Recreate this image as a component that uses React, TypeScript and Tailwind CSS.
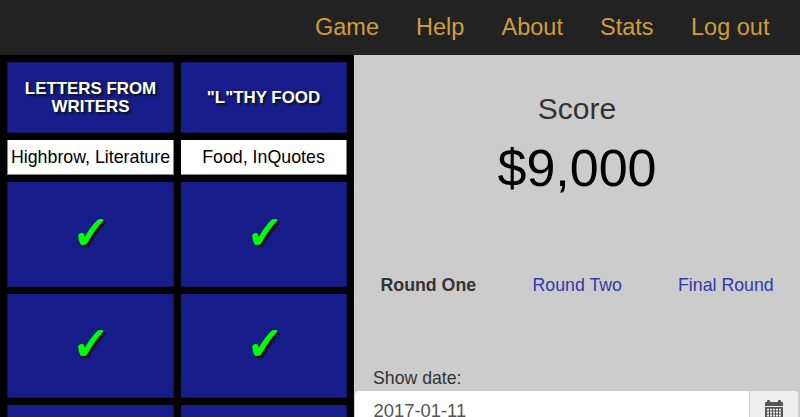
const navItems = [
  { label: "Game", width: "w-[101px]" },
  { label: "Help", width: "w-[85.5px]" },
  { label: "About", width: "w-[98.5px]" },
  { label: "Stats", width: "w-[91px]" },
  { label: "Log out", width: "w-[99px]" },
];

const categories = [
  { title: "LETTERS FROM WRITERS", tags: "Highbrow, Literature" },
  { title: '"L"THY FOOD', tags: "Food, InQuotes" },
];

const checkPath =
  "M0.2 17.2C0 15.1 2.2 13.9 4.4 14.1C6.2 14.3 6.3 17 7 17.6C10.5 11.5 14.5 5.5 19.2 1.2C20.8 0 23 -0.1 24.8 0.3C25.6 0.6 25.4 1.3 24.9 1.9C19 8.3 14 15.8 9.6 23.4C8.6 25.3 6.6 26 4.6 25.9C2.6 25.8 2.2 24.8 1.6 23.2C0.9 21.2 0.4 19.2 0.2 17.2Z";

function CheckMark() {
  return (
    <svg viewBox="0 0 29 29" className="h-[29px] w-[29px]">
      <path d={checkPath} fill="#111" transform="translate(2.4 2.4)" />
      <path d={checkPath} fill="#00ff00" />
    </svg>
  );
}

function Clue({ checked }: { checked?: boolean }) {
  return (
    <div className="flex items-center justify-center border-r border-b border-[#0f1460] bg-[#161d8b] pb-[2px] pl-[3px] odd:border-l even:pl-[5px]">
      {checked && <CheckMark />}
    </div>
  );
}

function Board() {
  return (
    <main className="grid w-[354px] shrink-0 grid-cols-[167px_166px] grid-rows-[71px_35px_105px_104px_105px] gap-x-[7px] gap-y-[7px] overflow-hidden border-r border-[#111] bg-black pt-[7px] pl-[7px]">
      {categories.map((c) => (
        <div
          key={c.title}
          className="flex items-center justify-center border-t border-r border-b border-[#0f1460] bg-[#161d8b] px-3 text-center text-[16.9px] leading-[18px] font-bold text-white [text-shadow:2px_2px_2px_#111] odd:border-l"
        >
          {c.title}
        </div>
      ))}
      {categories.map((c) => (
        <div
          key={c.tags}
          className="flex items-center justify-center border-r border-b border-[#888] bg-white text-[17.8px] whitespace-nowrap text-black odd:border-l"
        >
          {c.tags}
        </div>
      ))}
      <Clue checked />
      <Clue checked />
      <Clue checked />
      <Clue checked />
      <Clue />
      <Clue />
    </main>
  );
}

function CalendarIcon() {
  return (
    <svg viewBox="0 0 18 19" className="h-[19px] w-[18px]" fill="#555">
      <path d="M0 3Q0 2 1 2H2V1Q2 0 3 0H4Q5 0 5 1V2H13V1Q13 0 14 0H15Q16 0 16 1V2H17Q18 2 18 3V6H0Z" />
      <path
        fillRule="evenodd"
        d="M0 7H18V19H0ZM2 8.8V10.5H4V8.8ZM5 8.8V10.5H7V8.8ZM8 8.8V10.5H10V8.8ZM11 8.8V10.5H13V8.8ZM14 8.8V10.5H16V8.8ZM2 11.5V13.5H4V11.5ZM5 11.5V13.5H7V11.5ZM8 11.5V13.5H10V11.5ZM11 11.5V13.5H13V11.5ZM14 11.5V13.5H16V11.5ZM2 14.5V16.5H4V14.5ZM5 14.5V16.5H7V14.5ZM8 14.5V16.5H10V14.5ZM11 14.5V16.5H13V14.5ZM14 14.5V16.5H16V14.5Z"
      />
    </svg>
  );
}

function Sidebar() {
  return (
    <aside className="flex flex-1 flex-col overflow-hidden bg-[#ccc]">
      <div className="mt-[37px] text-center text-[30px] leading-[33px] text-[#333]">Score</div>
      <div className="mt-[13px] text-center text-[52px] leading-[60px] text-black">$9,000</div>
      <div className="mt-[75px] flex pl-[26.5px] text-[17.75px] leading-[24px] text-[#3238ad]">
        <b className="w-[152px] text-[#333]">Round One</b>
        <a className="w-[145.5px]">Round Two</a>
        <a>Final Round</a>
      </div>
      <label className="mt-[69px] pl-[19px] text-[17.7px] leading-[24px] text-[#333]">Show date:</label>
      <div className="mt-px mr-[2px] ml-px flex h-[45px] shrink-0 overflow-hidden rounded-[4px] bg-white">
        <div className="flex-1 pt-[7px] pl-[18.5px] text-[18.4px] leading-[25px] text-[#555]">2017-01-11</div>
        <div className="w-[49px] border-l border-[#ccc] bg-[#eee] pt-[9px] pl-[15px]">
          <CalendarIcon />
        </div>
      </div>
    </aside>
  );
}

export default function App() {
  return (
    <div className="flex h-[417px] w-[800px] flex-col overflow-hidden font-['Liberation_Sans',Arial,sans-serif]">
      <nav className="flex h-[55px] shrink-0 justify-end border-b border-[#1c1c1c] bg-[#222] text-[23.5px] leading-[54px] text-[#cf9e3c]">
        {navItems.map((n) => (
          <a key={n.label} className={n.width}>
            {n.label}
          </a>
        ))}
        <span className="w-[10px]" />
      </nav>
      <div className="flex min-h-0 flex-1">
        <Board />
        <Sidebar />
      </div>
    </div>
  );
}
